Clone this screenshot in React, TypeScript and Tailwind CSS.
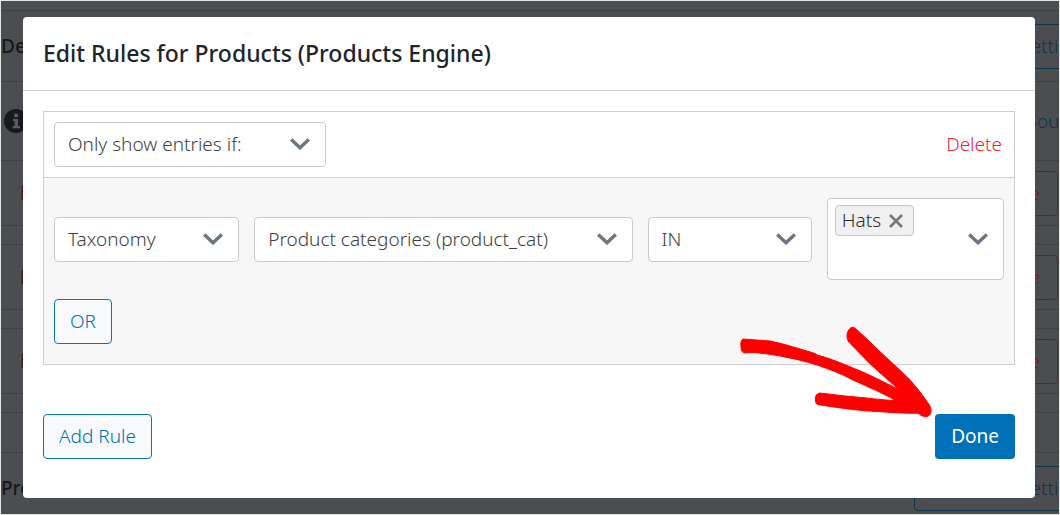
import { useState } from "react";
import type { ReactNode } from "react";
import { clsx } from "clsx";

const Chevron = ({ className }: { className?: string }) => (
  <svg
    viewBox="0 0 20 12"
    className={clsx("pointer-events-none h-3 w-5", className)}
    fill="none"
    stroke="#6c7781"
    strokeWidth="3.4"
    aria-hidden="true"
  >
    <path d="M1.2 1.4 10 9.8l8.8-8.4" />
  </svg>
);

type SelectProps = {
  label: string;
  options: string[];
  className?: string;
};

const Select = ({ label, options, className }: SelectProps) => (
  <label className={clsx("relative block", className)}>
    <span className="sr-only">{label}</span>
    <select className="block h-[45px] w-full appearance-none rounded border border-[#c9cbcd] bg-white pr-10 pl-[13px] text-[#3c3f42]">
      {options.map((option) => (
        <option key={option}>{option}</option>
      ))}
    </select>
    <Chevron className="absolute top-4 right-4" />
  </label>
);

const OutlineButton = ({ children }: { children: ReactNode }) => (
  <button
    type="button"
    className="h-[45px] rounded border border-[#0a75b5] bg-[#f8f9fa] px-[15px] text-[#0071b8]"
  >
    {children}
  </button>
);

const SettingsRow = ({ title }: { title: string }) => (
  <div className="flex h-[70px] items-center justify-between">
    <span className="font-medium text-[#14181b]">{title}</span>
    <button
      type="button"
      className="-mr-11 h-[45px] shrink-0 rounded border border-[#0b3549] pr-3 pl-[105px] text-[#0b3549]"
    >
      Settings
    </button>
  </div>
);

const EngineRow = () => (
  <div className="mb-[18px] flex h-[66px] items-center justify-between border-y border-[#404145] pr-px pl-[19px]">
    <span className="font-semibold text-[#3c1216]">E</span>
    <button
      type="button"
      className="h-[45px] rounded border border-[#6a1f2a] px-[17px] text-[#6a1f2a]"
    >
      Delete
    </button>
  </div>
);

// Settings page that sits dimmed behind the dialog
const PageBehind = () => (
  <div className="h-full overflow-hidden bg-[#4c4d50] pt-[9px]" aria-hidden="true" inert>
    <div className="border-t border-[#404145]">
      <SettingsRow title="De" />
      <div className="flex h-[79px] items-center justify-between border-t border-[#404145] pl-[3px]">
        <svg viewBox="0 0 24 24" className="size-6">
          <circle cx="12" cy="12" r="12" fill="#17191d" />
          <path d="M10.2 4.8h4v3.4h-4zM9 10h5.2v7H16v2.2H8.6V17h2v-4.800H9z" fill="#5b5c60" />
        </svg>
        <a href="#sources" className="-mr-9 text-[#0b3549]">
          Sources
        </a>
      </div>
      <EngineRow />
      <EngineRow />
      <EngineRow />
      <div className="h-[41px] border-y border-[#404145]" />
      <SettingsRow title="Pro" />
    </div>
  </div>
);

const Arrow = () => (
  <svg
    viewBox="0 0 194 94"
    className="pointer-events-none absolute right-[102px] bottom-[79px] h-[94px] w-[194px]"
    fill="#fe0000"
    stroke="#fe0000"
    strokeWidth="1"
    aria-hidden="true"
  >
    <path d="M4 14C2 15 1.500 18 2 21c0 4 1 7 4 7l7-.7c10 1 19 2 28 3.700 13 2.500 25 5 37 9 12 4 25 9 36 15 15 7 30 13 43 20.700C143 75 129 73 114 71.700 103 71 92 69 80.300 68c-3 1-4 3-4 6 0 4 1 6 5 6 20 3 40 6 60 6.700 13 1 26 1.600 38 1.600 3 3 7 4 10 2.700 2-1 3-3 2.700-6-.5-4-1.500-4.700-3-7C183 69 176 60 167.700 51.700 159 43 150 35 141 26.700 133 19 125 11 117 4c-2-2-4-2.500-6-.5-2 2-3 4-3 7s.6 5 2.300 7c9 9 18 19 27.400 27.500l22 19.300C144 57 130 49 114 43 102 38 90 33 78 30l-2-1.500C61 24 46 19 31 16Z" />
  </svg>
);

const App = () => {
  const [terms, setTerms] = useState(["Hats"]);

  const removeTerm = (term: string) => {
    setTerms((prev) => prev.filter((item) => item !== term));
  };

  return (
    <div className="relative h-screen overflow-hidden border border-[#e4e6e6] bg-[#4c4d50] font-['Noto_Sans','Open_Sans',sans-serif] text-[19px] font-light">
      <PageBehind />

      <div className="absolute inset-0 pt-4 pr-6 pl-[22px]">
        <div
          role="dialog"
          aria-labelledby="rules-title"
          className="relative rounded-[4px] bg-white"
        >
          <header className="flex h-[74px] items-center border-b border-[#d0d2d4] px-5">
            <h2 id="rules-title" className="text-[23px] font-medium text-[#1d252b]">
              Edit Rules for Products (Products Engine)
            </h2>
          </header>

          <div className="px-5 pt-5 pb-[39px]">
            <section className="border border-[#cdd0d2]">
              <div className="flex items-center justify-between p-2.5">
                <Select
                  label="Rule action"
                  options={["Only show entries if:", "Exclude entries if:"]}
                  className="w-[272px]"
                />
                <button type="button" className="pr-0.5 text-[#e8262d]">
                  Delete
                </button>
              </div>

              <div className="border-t border-[#cdd0d2] bg-[#f7f7f7] px-2.5 py-5">
                <div className="grid grid-cols-[185fr_378fr_164fr_177fr] items-center gap-x-[15px]">
                  <Select label="Condition" options={["Taxonomy", "Post ID"]} />
                  <Select label="Taxonomy" options={["Product categories (product_cat)"]} />
                  <Select label="Operator" options={["IN", "NOT IN"]} />

                  <div className="flex h-[82px] items-center justify-between rounded border border-[#c9cbcd] bg-white pr-[15px] pl-[7px]">
                    <div className="flex flex-wrap gap-1 self-start pt-1.5">
                      {terms.map((term) => (
                        <span
                          key={term}
                          className="flex h-[31px] items-center gap-2 rounded border border-[#c4c6c8] bg-[#f0f0f0] pr-2.5 pl-1.5 text-[#2c2f32]"
                        >
                          {term}
                          <button
                            type="button"
                            aria-label={`Remove ${term}`}
                            onClick={() => removeTerm(term)}
                          >
                            <svg
                              viewBox="0 0 14 14"
                              className="size-3.5"
                              stroke="#74777a"
                              strokeWidth="2.6"
                            >
                              <path d="m1 1 12 12M13 1 1 13" />
                            </svg>
                          </button>
                        </span>
                      ))}
                    </div>
                    <button type="button" aria-label="Show categories">
                      <Chevron />
                    </button>
                  </div>
                </div>

                <div className="mt-[19px]">
                  <OutlineButton>OR</OutlineButton>
                </div>
              </div>
            </section>

            <footer className="mt-[49px] flex items-center justify-between">
              <OutlineButton>Add Rule</OutlineButton>
              <button type="button" className="h-[45px] rounded bg-[#0071b8] px-4 font-normal text-white">
                Done
              </button>
            </footer>
          </div>

          <Arrow />
        </div>
      </div>
    </div>
  );
};

export default App;
